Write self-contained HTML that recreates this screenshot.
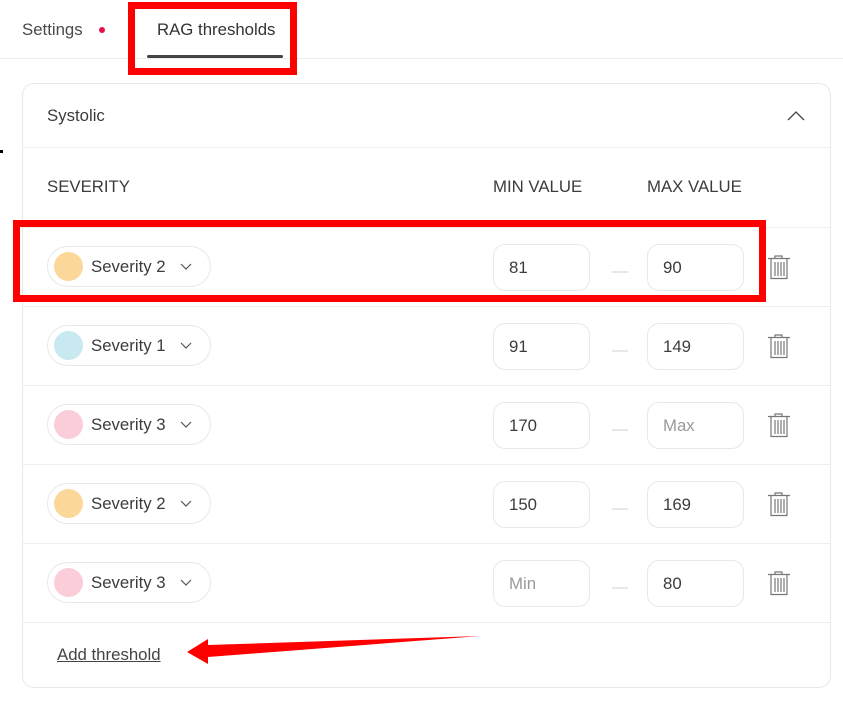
<!DOCTYPE html>
<html><head><meta charset="utf-8"><style>
*{box-sizing:border-box;margin:0;padding:0}
body{width:843px;height:708px;background:#fff;font-family:"Liberation Sans",sans-serif;color:#3c3c3c;position:relative;overflow:hidden}
.a{position:absolute}
.t{font-size:16.8px;line-height:20px}
.card{left:22px;top:83px;width:809px;height:605px;border:1px solid #e8e8e8;border-radius:12px}
.hl{height:1px;background:#eeeeee;left:23px;width:807px}
.pill{width:164px;height:41px;border:1px solid #e8e8e8;border-radius:21px}
.dot{left:6px;top:5px;width:29px;height:29px;border-radius:50%}
.inp{width:97px;height:47px;border:1px solid #e8e8e8;border-radius:12px;padding:15px 0 0 15px;font-size:16.8px;line-height:16px}
.ph{color:#9a9a9a}
.dash{width:16px;height:2px;background:#e8e8e8}
.red{border:7px solid #ff0000}
</style></head><body>
<div class="a t" style="left:22px;top:20px;color:#4a4a4a">Settings</div>
<div class="a" style="left:99px;top:27px;width:6px;height:6px;border-radius:50%;background:#e8104a"></div>
<div class="a t" style="left:157px;top:20px;color:#333">RAG thresholds</div>
<div class="a" style="left:147px;top:55px;width:136px;height:3px;background:#444;border-radius:2px"></div>
<div class="a" style="left:0;top:58px;width:843px;height:1px;background:#ececec"></div>
<div class="a red" style="left:128px;top:2px;width:169px;height:73px"></div>
<div class="a" style="left:0;top:150px;width:3px;height:3px;background:#000"></div>

<div class="a card"></div>
<div class="a t" style="left:47px;top:106px">Systolic</div>
<svg class="a" style="left:786px;top:110px" width="20" height="12"><path d="M2 10 L10 2 L18 10" fill="none" stroke="#444" stroke-width="1.3"/></svg>
<div class="a hl" style="top:147px"></div>
<div class="a t" style="left:47px;top:177px">SEVERITY</div>
<div class="a t" style="left:493px;top:177px">MIN VALUE</div>
<div class="a t" style="left:647px;top:177px">MAX VALUE</div>

<div class="a hl" style="top:227px"></div>
<div class="a pill" style="left:47px;top:246px"><div class="a dot" style="background:#fbd89a"></div><div class="a t" style="left:43px;top:10px">Severity 2</div><svg class="a" style="left:132px;top:16px" width="12" height="8"><path d="M1 1 L6 6 L11 1" fill="none" stroke="#555" stroke-width="1.2"/></svg></div>
<div class="a inp" style="left:493px;top:244px">81</div><div class="a dash" style="left:612px;top:271px"></div><div class="a inp" style="left:647px;top:244px">90</div>
<svg class="a" style="left:767px;top:255px" width="24" height="25"><path d="M8 3V1H15V3M1 3.5H23M4 3.5V23.5H20V3.5M8 7V21M11 7V21M14 7V21M17 7V21" fill="none" stroke="#777" stroke-width="1.2"/></svg>

<div class="a hl" style="top:306px"></div>
<div class="a pill" style="left:47px;top:325px"><div class="a dot" style="background:#c8e9ef"></div><div class="a t" style="left:43px;top:10px">Severity 1</div><svg class="a" style="left:132px;top:16px" width="12" height="8"><path d="M1 1 L6 6 L11 1" fill="none" stroke="#555" stroke-width="1.2"/></svg></div>
<div class="a inp" style="left:493px;top:323px">91</div><div class="a dash" style="left:612px;top:350px"></div><div class="a inp" style="left:647px;top:323px">149</div>
<svg class="a" style="left:767px;top:334px" width="24" height="25"><path d="M8 3V1H15V3M1 3.5H23M4 3.5V23.5H20V3.5M8 7V21M11 7V21M14 7V21M17 7V21" fill="none" stroke="#777" stroke-width="1.2"/></svg>

<div class="a hl" style="top:385px"></div>
<div class="a pill" style="left:47px;top:404px"><div class="a dot" style="background:#fbcdd8"></div><div class="a t" style="left:43px;top:10px">Severity 3</div><svg class="a" style="left:132px;top:16px" width="12" height="8"><path d="M1 1 L6 6 L11 1" fill="none" stroke="#555" stroke-width="1.2"/></svg></div>
<div class="a inp" style="left:493px;top:402px">170</div><div class="a dash" style="left:612px;top:429px"></div><div class="a inp ph" style="left:647px;top:402px">Max</div>
<svg class="a" style="left:767px;top:413px" width="24" height="25"><path d="M8 3V1H15V3M1 3.5H23M4 3.5V23.5H20V3.5M8 7V21M11 7V21M14 7V21M17 7V21" fill="none" stroke="#777" stroke-width="1.2"/></svg>

<div class="a hl" style="top:464px"></div>
<div class="a pill" style="left:47px;top:483px"><div class="a dot" style="background:#fbd89a"></div><div class="a t" style="left:43px;top:10px">Severity 2</div><svg class="a" style="left:132px;top:16px" width="12" height="8"><path d="M1 1 L6 6 L11 1" fill="none" stroke="#555" stroke-width="1.2"/></svg></div>
<div class="a inp" style="left:493px;top:481px">150</div><div class="a dash" style="left:612px;top:508px"></div><div class="a inp" style="left:647px;top:481px">169</div>
<svg class="a" style="left:767px;top:492px" width="24" height="25"><path d="M8 3V1H15V3M1 3.5H23M4 3.5V23.5H20V3.5M8 7V21M11 7V21M14 7V21M17 7V21" fill="none" stroke="#777" stroke-width="1.2"/></svg>

<div class="a hl" style="top:543px"></div>
<div class="a pill" style="left:47px;top:562px"><div class="a dot" style="background:#fbcdd8"></div><div class="a t" style="left:43px;top:10px">Severity 3</div><svg class="a" style="left:132px;top:16px" width="12" height="8"><path d="M1 1 L6 6 L11 1" fill="none" stroke="#555" stroke-width="1.2"/></svg></div>
<div class="a inp ph" style="left:493px;top:560px">Min</div><div class="a dash" style="left:612px;top:587px"></div><div class="a inp" style="left:647px;top:560px">80</div>
<svg class="a" style="left:767px;top:571px" width="24" height="25"><path d="M8 3V1H15V3M1 3.5H23M4 3.5V23.5H20V3.5M8 7V21M11 7V21M14 7V21M17 7V21" fill="none" stroke="#777" stroke-width="1.2"/></svg>

<div class="a hl" style="top:622px"></div>
<div class="a t" style="left:57px;top:645px;text-decoration:underline;color:#444">Add threshold</div>

<div class="a red" style="left:13px;top:220px;width:753px;height:82px"></div>
<svg class="a" style="left:0;top:0" width="843" height="708"><path d="M187 652 L208 639 L208 645 L480 636 L208 657 L208 664 Z" fill="#ff0000"/></svg>
</body></html>
